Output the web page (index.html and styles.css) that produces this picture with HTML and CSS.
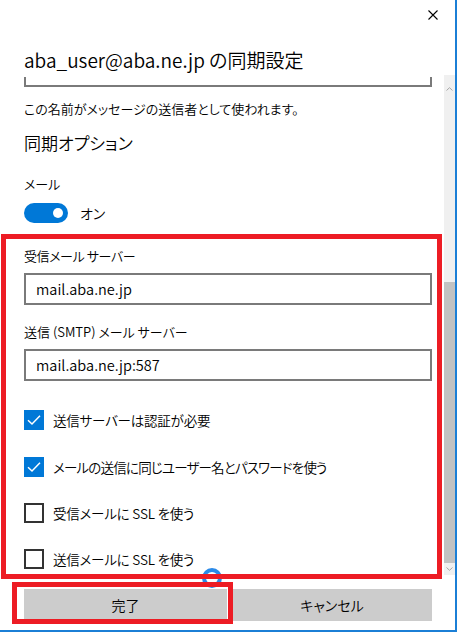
FILE: index.html
```html
<!DOCTYPE html>
<html lang="ja">
<head>
<meta charset="utf-8">
<link rel="stylesheet" href="styles.css">
</head>
<body>
<div class="window">
  <div class="titlebar">
    <svg class="close" width="10" height="10" viewBox="0 0 10 10"><path d="M0.5 0.5 L9.5 9.5 M9.5 0.5 L0.5 9.5" stroke="#000" stroke-width="1.1" fill="none"/></svg>
  </div>
  <div class="header">aba_user@aba.ne.jp の同期設定</div>
  <div class="main">
    <div class="content">
      <div class="stub"></div>
      <div class="desc">この名前がメッセージの送信者として使われます。</div>
      <div class="section-title">同期オプション</div>
      <div class="label mail-label">メール</div>
      <div class="toggle-row">
        <span class="toggle"><span class="knob"></span></span>
        <span class="toggle-text">オン</span>
      </div>
      <div class="label in-label">受信メール サーバー</div>
      <div class="input">mail.aba.ne.jp</div>
      <div class="label smtp-label">送信 (SMTP) メール サーバー</div>
      <div class="input">mail.aba.ne.jp:587</div>
      <div class="cb-row cb1">
        <span class="cb checked"><svg width="20" height="20" viewBox="0 0 20 20"><path d="M4 10.2 L8 14 L16 5.8" stroke="#fff" stroke-width="1.5" fill="none"/></svg></span>
        <span class="cb-text">送信サーバーは認証が必要</span>
      </div>
      <div class="cb-row cb2">
        <span class="cb checked"><svg width="20" height="20" viewBox="0 0 20 20"><path d="M4 10.2 L8 14 L16 5.8" stroke="#fff" stroke-width="1.5" fill="none"/></svg></span>
        <span class="cb-text cb-text-long">メールの送信に同じユーザー名とパスワードを使う</span>
      </div>
      <div class="cb-row cb3">
        <span class="cb"></span>
        <span class="cb-text">受信メールに SSL を使う</span>
      </div>
      <div class="cb-row cb4">
        <span class="cb"></span>
        <span class="cb-text">送信メールに SSL を使う</span>
      </div>
    </div>
    <div class="scrollbar">
      <div class="sb-btn sb-up"><svg width="7" height="4" viewBox="0 0 7 4"><path d="M0.5 3.5 L3.5 0.7 L6.5 3.5" stroke="#a6a6a6" stroke-width="1" fill="none"/></svg></div>
      <div class="sb-track"></div>
      <div class="sb-thumb"></div>
      <div class="sb-btn sb-down"><svg width="7" height="4" viewBox="0 0 7 4"><path d="M0.5 0.5 L3.5 3.3 L6.5 0.5" stroke="#a6a6a6" stroke-width="1" fill="none"/></svg></div>
    </div>
  </div>
  <div class="footer">
    <div class="btn">完了</div>
    <div class="btn">キャンセル</div>
  </div>
  <svg class="spinner" width="22" height="22" viewBox="0 0 22 22"><circle cx="11" cy="11" r="8" stroke="#2b8ae8" stroke-width="4" fill="none"/></svg>
  <div class="redbox box-main"></div>
  <div class="redbox box-done"></div>
</div>
</body>
</html>
```

FILE: styles.css
```css
* { box-sizing: border-box; }
html, body { margin: 0; padding: 0; background: #fff; }
body {
  font-family: "Noto Sans CJK JP", sans-serif;
  font-feature-settings: "palt";
  font-weight: 350;
  color: #000;
}
.window {
  position: relative;
  width: 457px;
  height: 632px;
  border-right: 2px solid #1b7fd6;
  border-bottom: 2px solid #1b7fd6;
  display: flex;
  flex-direction: column;
  overflow: hidden;
}
.titlebar {
  height: 45px;
  display: flex;
  justify-content: flex-end;
  padding: 10px 17px 0 0;
}
.close { display: block; }
.header {
  height: 30px;
  padding-left: 24px;
  font-size: 19px;
  line-height: 30px;
  white-space: nowrap;
}
.main {
  height: 500px;
  display: flex;
}
.content {
  flex: 1;
  overflow: hidden;
  padding: 0 12px 0 24px;
}
.stub {
  margin-top: 2px;
  height: 10px;
  border: 2px solid #7a7a7a;
  border-top: none;
}
.desc {
  margin-top: 12px;
  font-size: 13px;
  line-height: 20px;
  white-space: nowrap;
}
.section-title {
  margin-top: 12px;
  font-size: 17px;
  line-height: 24px;
}
.label {
  font-size: 13px;
  line-height: 20px;
  white-space: nowrap;
}
.in-label { letter-spacing: -0.4px; }
.mail-label { margin-top: 19px; }
.toggle-row {
  margin-top: 9px;
  height: 20px;
  display: flex;
  align-items: center;
  gap: 12px;
}
.toggle {
  width: 44px;
  height: 20px;
  border-radius: 10px;
  background: #0078d7;
  display: flex;
  align-items: center;
  justify-content: flex-end;
  padding-right: 5px;
}
.knob {
  width: 10px;
  height: 10px;
  border-radius: 50%;
  background: #fff;
}
.toggle-text { font-size: 14px; line-height: 20px; }
.in-label { margin-top: 23px; }
.smtp-label { margin-top: 17px; }
.input {
  margin-top: 7px;
  height: 32px;
  border: 2px solid #7a7a7a;
  padding-left: 10px;
  font-size: 14.5px;
  line-height: 28px;
  white-space: nowrap;
}
.cb-row {
  height: 20px;
  display: flex;
  align-items: center;
  gap: 9px;
}
.cb1 { margin-top: 29px; }
.cb2 { margin-top: 27px; }
.cb3 { margin-top: 26px; }
.cb4 { margin-top: 26px; }
.cb {
  width: 20px;
  height: 20px;
  flex: none;
  border: 2px solid #333;
}
.cb.checked {
  border: none;
  background: #0078d7;
}
.cb svg { display: block; }
.cb-text {
  font-size: 13.5px;
  line-height: 20px;
  white-space: nowrap;
  letter-spacing: -0.2px;
}
.cb-text-long { letter-spacing: -0.8px; }
.scrollbar {
  width: 11px;
  display: flex;
  flex-direction: column;
  background: #f0f0f0;
}
.sb-btn {
  display: flex;
  justify-content: center;
  align-items: center;
}
.sb-btn svg { display: block; }
.sb-up { height: 28px; }
.sb-track { height: 179px; }
.sb-thumb { height: 281px; background: #c2c2c2; }
.sb-down { height: 12px; }
.footer {
  display: grid;
  grid-template-columns: 203px 200px;
  gap: 5px;
  padding: 14px 0 0 24px;
}
.btn {
  height: 32px;
  background: #cccccc;
  font-size: 14px;
  line-height: 32px;
  text-align: center;
}
.spinner {
  position: absolute;
  left: 201px;
  top: 567px;
}
.redbox {
  position: absolute;
  border: 5px solid #ed1c24;
}
.box-main { left: 1px; top: 234px; width: 441px; height: 345px; }
.box-done { left: 12px; top: 582px; width: 221px; height: 42px; }
```
